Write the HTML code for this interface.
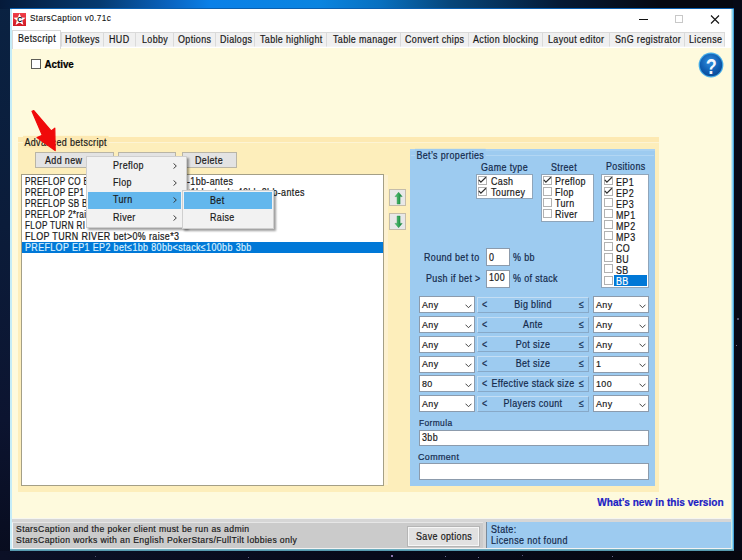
<!DOCTYPE html>
<html><head><meta charset="utf-8">
<style>
*{margin:0;padding:0;box-sizing:border-box}
html,body{width:742px;height:560px;overflow:hidden}
body{position:relative;background:#0a1730;font-family:"Liberation Sans",sans-serif;font-size:9.6px;color:#1a1a1a}
.a{position:absolute}
.t{position:absolute;line-height:11px;white-space:nowrap;font-size:9.6px;-webkit-text-stroke-width:0.2px;letter-spacing:0.4px;transform:translateY(-0.3px) scale(0.93,1.1);transform-origin:0 8.8px}
.nb{letter-spacing:0;transform:translateY(-0.3px) scaleY(1.1)}
#bg{position:absolute;left:0;top:0;width:742px;height:560px;
 background:linear-gradient(180deg,rgba(0,0,0,0) 0px,rgba(0,0,0,0) 560px),
  linear-gradient(180deg,#0a2242 0%,#0b1c3a 40%,#0c1430 75%,#080c1e 100%)}
#topglow{position:absolute;left:0;top:0;width:742px;height:9px;
 background:linear-gradient(90deg,#051a3a 0px,#053a70 100px,#0a64c0 170px,#0a80e8 210px,#0a84e0 320px,#0870c0 380px,#06467a 450px,#051a35 560px,#050812 660px,#050812 742px)}
#rightdark{position:absolute;left:733px;top:0;width:9px;height:560px;background:#060916}
#botdark{position:absolute;left:0;top:551px;width:742px;height:9px;background:linear-gradient(90deg,#0b1026,#070a1a 50%,#05070f)}
#win{position:absolute;left:10px;top:8px;width:724px;height:543px;background:#0a5fb0}
#wl{position:absolute;left:10px;top:9px;width:1.8px;height:541px;background:#c4ecf8}
#wr{position:absolute;left:730.5px;top:9px;width:3.5px;height:541px;background:linear-gradient(90deg,#e2e2d6 0%,#b8ecfa 30%,#55b5e3 75%,#2a80c0 100%)}
#wb{position:absolute;left:10px;top:549px;width:724px;height:2px;background:linear-gradient(180deg,#7ab8c8 0%,#4a90a6 100%)}
#title{position:absolute;left:11px;top:9px;width:720px;height:23px;background:#fff}
#tabs{position:absolute;left:11px;top:31px;width:720px;height:17px;background:#fff}
.tab{position:absolute;top:31.5px;height:15.5px;background:#f0f0f0;border:1px solid #dadada;border-bottom:1px solid #f4f4f4}
#content{position:absolute;left:11px;top:47.5px;width:720px;height:472px;background:#fefadd}
#group{position:absolute;left:18px;top:137px;width:641px;height:355px;background:#fdeebb}
#list{position:absolute;left:21px;top:174px;width:363px;height:312px;background:#fff;border:1px solid #a49f86}
.btn{position:absolute;background:#e3e3e3;border:1px solid #b9b5a6}
#panel{position:absolute;left:410px;top:149px;width:245px;height:337px;background:#9dcbf0}
.box{position:absolute;background:#fff;border:1px solid #8fa5ba}
.cb{position:absolute;width:9px;height:9px;border:1px solid #b2b2b2;background:#fff}
.lbl{color:#142a4c}
.combo{position:absolute;width:56px;height:17px;background:#fff;border:1px solid #8c9bac}
.mid{position:absolute;left:477px;width:112px;height:16px;background:#9dcbf0;border:1px solid #c4def4;border-right-color:#87a9c8;border-bottom-color:#87a9c8}
.inp{position:absolute;background:#fff;border:1px solid #8c9bac}
#menu{position:absolute;left:86px;top:156px;width:101px;height:72px;background:#f2f2f2;border:1px solid #cfcfcf;box-shadow:2px 2px 2px rgba(0,0,0,0.38)}
#sub{position:absolute;left:182px;top:190px;width:92px;height:39px;background:#f2f2f2;border:1px solid #cfcfcf;box-shadow:2px 2px 2px rgba(0,0,0,0.38)}
.hl{position:absolute;background:#63b7ed}
</style></head><body>
<div id="bg"></div>
<div id="topglow"></div>
<div id="rightdark"></div>
<div id="botdark"></div>
<div class="a" style="left:391px;top:555px;width:2px;height:2px;background:#b89ae0;border-radius:1px"></div>
<div class="a" style="left:445px;top:556px;width:1px;height:1px;background:#6a6a90"></div>
<div class="a" style="left:478px;top:557px;width:1px;height:1px;background:#707090"></div>
<div class="a" style="left:522px;top:555px;width:1px;height:1px;background:#5a5a80"></div>
<div class="a" style="left:612px;top:556px;width:1px;height:1px;background:#6a6a90"></div>
<div class="a" style="left:664px;top:547px;width:1px;height:1px;background:#8080a0"></div>
<div class="a" style="left:737px;top:318px;width:2px;height:2px;background:#6a6a88;border-radius:1px"></div>
<div class="a" style="left:736px;top:345px;width:1px;height:1px;background:#707090"></div>
<div class="a" style="left:95px;top:556px;width:1px;height:1px;background:#505070"></div>
<div class="a" style="left:248px;top:557px;width:1px;height:1px;background:#606080"></div>
<div id="win"></div>
<div id="title"></div>
<!-- icon -->
<svg class="a" style="left:12.5px;top:12.5px" width="13" height="13" viewBox="0 0 13 13">
 <defs><linearGradient id="ig" x1="0" y1="0" x2="0" y2="1"><stop offset="0" stop-color="#f0404a"/><stop offset="1" stop-color="#d01822"/></linearGradient></defs>
 <rect x="0" y="0" width="13" height="13" fill="url(#ig)"/>
 <polygon points="6.5,0.6 8.2,4.6 12.6,4.8 9.2,7.6 10.4,12 6.5,9.6 2.6,12 3.8,7.6 0.4,4.8 4.8,4.6" fill="#fff"/>
 <text x="6.6" y="9.3" font-size="6.8" font-weight="bold" text-anchor="middle" fill="#000" font-family="Liberation Sans">C</text>
</svg>
<div class="t" style="left:29.5px;top:13px;font-size:8.85px;color:#111;-webkit-text-stroke-width:0.1px">StarsCaption v0.71c</div>
<!-- title buttons -->
<div class="a" style="left:639px;top:19px;width:9px;height:1px;background:#111"></div>
<div class="a" style="left:675px;top:15px;width:8px;height:8px;border:1px solid #c8c8c8"></div>
<svg class="a" style="left:710px;top:15px" width="10" height="9" viewBox="0 0 10 9"><path d="M1 0.5 L9 8.5 M9 0.5 L1 8.5" stroke="#111" stroke-width="1.1"/></svg>

<div id="tabs"></div>
<div class="tab" style="left:61px;width:43px"></div>
<div class="tab" style="left:103px;width:33px"></div>
<div class="tab" style="left:135px;width:39px"></div>
<div class="tab" style="left:173px;width:43px"></div>
<div class="tab" style="left:215px;width:40px"></div>
<div class="tab" style="left:254px;width:73px"></div>
<div class="tab" style="left:326px;width:75px"></div>
<div class="tab" style="left:400px;width:69px"></div>
<div class="tab" style="left:468px;width:75px"></div>
<div class="tab" style="left:542px;width:68px"></div>
<div class="tab" style="left:609px;width:76px"></div>
<div class="tab" style="left:684px;width:41px"></div>
<div id="content"></div>
<div class="a" style="left:12px;top:30px;width:49px;height:19px;background:#fff;border:1px solid #d9d9d9;border-bottom:none"></div>
<div class="t" style="left:17.8px;top:33px">Betscript</div>
<div class="t" style="left:65px;top:34.5px;transform:translateY(-0.6px) scale(0.93,1.06)">Hotkeys</div>
<div class="t" style="left:109px;top:34.5px;transform:translateY(-0.6px) scale(0.93,1.06)">HUD</div>
<div class="t" style="left:142px;top:34.5px;transform:translateY(-0.6px) scale(0.93,1.06)">Lobby</div>
<div class="t" style="left:177.6px;top:34.5px;transform:translateY(-0.6px) scale(0.93,1.06)">Options</div>
<div class="t" style="left:220px;top:34.5px;transform:translateY(-0.6px) scale(0.93,1.06)">Dialogs</div>
<div class="t" style="left:260px;top:34.5px;transform:translateY(-0.6px) scale(0.93,1.06)">Table highlight</div>
<div class="t" style="left:332.8px;top:34.5px;transform:translateY(-0.6px) scale(0.93,1.06)">Table manager</div>
<div class="t" style="left:405.3px;top:34.5px;transform:translateY(-0.6px) scale(0.93,1.06)">Convert chips</div>
<div class="t" style="left:472.8px;top:34.5px;transform:translateY(-0.6px) scale(0.93,1.06)">Action blocking</div>
<div class="t" style="left:548.3px;top:34.5px;transform:translateY(-0.6px) scale(0.93,1.06)">Layout editor</div>
<div class="t" style="left:615px;top:34.5px;transform:translateY(-0.6px) scale(0.93,1.06)">SnG registrator</div>
<div class="t" style="left:689px;top:34.5px;transform:translateY(-0.6px) scale(0.93,1.06)">License</div>

<!-- Active -->
<div class="a" style="left:30.8px;top:59.2px;width:10px;height:10.2px;border:1.2px solid #5e5e58;background:#fff"></div>
<div class="t nb" style="left:44.4px;top:58.5px;font-weight:bold;font-size:9.8px;color:#000">Active</div>

<!-- help icon -->
<svg class="a" style="left:698px;top:52px" width="26" height="26" viewBox="0 0 26 26">
 <defs><radialGradient id="hg" cx="0.45" cy="0.35" r="0.7"><stop offset="0" stop-color="#2f8ee0"/><stop offset="0.65" stop-color="#0f5cb0"/><stop offset="1" stop-color="#0a4690"/></radialGradient></defs>
 <circle cx="13" cy="13" r="12.4" fill="#46aeea"/>
 <circle cx="13" cy="13" r="11.2" fill="url(#hg)"/>
 <text transform="translate(13.2,21.6) scale(0.8,1)" x="0" y="0" font-size="22.5" font-weight="bold" text-anchor="middle" fill="#f4f8ff" font-family="Liberation Sans">?</text>
</svg>

<!-- group -->
<div id="group"></div>
<div class="a" style="left:18px;top:137px;width:641px;height:5px;background:#fde9b2"></div>
<div class="a" style="left:18px;top:142px;width:641px;height:1px;background:#fdf4d4"></div>
<div class="t" style="left:22.5px;top:137px;padding:0 2px 0 1.5px;background:#fde9b2">Advanced betscript</div>
<div class="btn" style="left:35px;top:152px;width:79px;height:16px"></div>
<div class="btn" style="left:118px;top:152px;width:58px;height:16px"></div>
<div class="btn" style="left:182px;top:152px;width:55px;height:16px"></div>
<div class="t" style="left:44.8px;top:155px">Add new</div>
<div class="t" style="left:195px;top:155px">Delete</div>

<div id="list"></div>
<div class="a" style="left:22px;top:242px;width:361px;height:11px;background:#0078d7"></div>
<div class="t" style="left:24.5px;top:175.8px;transform:translateY(-0.3px) scale(0.85,1.1)">PREFLOP CO BU bet≤1bb</div><div class="t" style="left:186.6px;top:175.8px">-1bb-antes</div>
<div class="t" style="left:24.5px;top:186.8px;transform:translateY(-0.3px) scale(0.85,1.1)">PREFLOP EP1 &nbsp;bet≤1bb</div><div class="t" style="right:437.5px;top:186.8px;transform-origin:100% 8.8px">bet≤1bb stack≥40bb 2bb-antes</div>
<div class="t" style="left:24.5px;top:197.8px;transform:translateY(-0.3px) scale(0.85,1.1)">PREFLOP SB BB bet≤1bb 3bb</div>
<div class="t" style="left:24.5px;top:208.8px;transform:translateY(-0.3px) scale(0.85,1.1)">PREFLOP 2*raise 4bb</div>
<div class="t" style="left:24.5px;top:219.8px;transform:translateY(-0.3px) scale(0.85,1.1)">FLOP TURN RI</div>
<div class="t" style="left:24.5px;top:230.8px">FLOP TURN RIVER bet&gt;0% raise*3</div>
<div class="t" style="left:24.5px;top:241.8px;color:#d8f0ff">PREFLOP EP1 EP2 bet≤1bb 80bb&lt;stack≤100bb 3bb</div>

<div class="a" style="left:384px;top:175px;width:3.5px;height:310px;background:#fdf1d0"></div>
<!-- up/down -->
<div class="btn" style="left:389px;top:189px;width:17px;height:17px;background:#e8e8e8;border-color:#c4bcaa"></div>
<div class="btn" style="left:389px;top:213px;width:17px;height:17px;background:#e8e8e8;border-color:#c4bcaa"></div>
<svg class="a" style="left:393px;top:191px" width="11" height="14" viewBox="0 0 11 14"><defs><linearGradient id="ga" x1="0" y1="0" x2="1" y2="0"><stop offset="0" stop-color="#5ccf7c"/><stop offset="1" stop-color="#0f7a35"/></linearGradient></defs><path d="M5.6 1.2 L9.2 5.6 L7.1 5.6 L7.1 13 L4.1 13 L4.1 5.6 L2 5.6 Z" fill="url(#ga)" stroke="#1a8a40" stroke-width="0.4"/></svg>
<svg class="a" style="left:393px;top:215px" width="11" height="14" viewBox="0 0 11 14"><path d="M5.6 12.8 L9.2 8.4 L7.1 8.4 L7.1 1 L4.1 1 L4.1 8.4 L2 8.4 Z" fill="url(#ga)" stroke="#1a8a40" stroke-width="0.4"/></svg>

<!-- panel -->
<div id="panel"></div>
<div class="a" style="left:410px;top:149px;width:245px;height:2px;background:#a8d1f2"></div>
<div class="a" style="left:411px;top:154.5px;width:243px;height:1px;background:#b2d6f3"></div>
<div class="t lbl" style="left:414.5px;top:149.8px;padding:0 2px 0 1.5px;background:#9dcbf0">Bet’s properties</div>
<div class="t lbl" style="left:481.4px;top:161.6px">Game type</div>
<div class="t lbl" style="left:551.4px;top:161.6px">Street</div>
<div class="t lbl" style="left:605.5px;top:161px">Positions</div>

<div class="box" style="left:475.5px;top:174px;width:57px;height:24.5px"></div>
<div class="box" style="left:540.5px;top:173.5px;width:53px;height:48px"></div>
<div class="box" style="left:600.8px;top:173.8px;width:48.2px;height:114px"></div>

<!-- positions BB highlight -->
<div class="a" style="left:614px;top:275px;width:33px;height:10.5px;background:#0078d7"></div>

<div class="cb" style="left:478px;top:176.2px"></div><svg class="a" style="left:478px;top:176.2px" width="9" height="9" viewBox="0 0 9 9"><path d="M0.8 3.9 L2.9 6.2 L7.9 1.3" fill="none" stroke="#2e2e2e" stroke-width="1.2"/></svg>
<div class="t" style="left:490.9px;top:176.4px">Cash</div>
<div class="cb" style="left:478px;top:187.2px"></div><svg class="a" style="left:478px;top:187.2px" width="9" height="9" viewBox="0 0 9 9"><path d="M0.8 3.9 L2.9 6.2 L7.9 1.3" fill="none" stroke="#2e2e2e" stroke-width="1.2"/></svg>
<div class="t" style="left:490.9px;top:187.4px">Tourney</div>
<div class="cb" style="left:543.2px;top:176.2px"></div><svg class="a" style="left:543.2px;top:176.2px" width="9" height="9" viewBox="0 0 9 9"><path d="M0.8 3.9 L2.9 6.2 L7.9 1.3" fill="none" stroke="#2e2e2e" stroke-width="1.2"/></svg>
<div class="t" style="left:555px;top:176.0px">Preflop</div>
<div class="cb" style="left:543.2px;top:187.2px"></div>
<div class="t" style="left:555px;top:187.0px">Flop</div>
<div class="cb" style="left:543.2px;top:198.2px"></div>
<div class="t" style="left:555px;top:198.0px">Turn</div>
<div class="cb" style="left:543.2px;top:209.2px"></div>
<div class="t" style="left:555px;top:209.0px">River</div>
<div class="cb" style="left:604px;top:176.2px"></div><svg class="a" style="left:604px;top:176.2px" width="9" height="9" viewBox="0 0 9 9"><path d="M0.8 3.9 L2.9 6.2 L7.9 1.3" fill="none" stroke="#2e2e2e" stroke-width="1.2"/></svg>
<div class="t" style="left:615.5px;top:176.5px">EP1</div>
<div class="cb" style="left:604px;top:187.2px"></div><svg class="a" style="left:604px;top:187.2px" width="9" height="9" viewBox="0 0 9 9"><path d="M0.8 3.9 L2.9 6.2 L7.9 1.3" fill="none" stroke="#2e2e2e" stroke-width="1.2"/></svg>
<div class="t" style="left:615.5px;top:187.5px">EP2</div>
<div class="cb" style="left:604px;top:198.3px"></div>
<div class="t" style="left:615.5px;top:198.6px">EP3</div>
<div class="cb" style="left:604px;top:209.3px"></div>
<div class="t" style="left:615.5px;top:209.6px">MP1</div>
<div class="cb" style="left:604px;top:220.3px"></div>
<div class="t" style="left:615.5px;top:220.6px">MP2</div>
<div class="cb" style="left:604px;top:231.4px"></div>
<div class="t" style="left:615.5px;top:231.7px">MP3</div>
<div class="cb" style="left:604px;top:242.4px"></div>
<div class="t" style="left:615.5px;top:242.7px">CO</div>
<div class="cb" style="left:604px;top:253.4px"></div>
<div class="t" style="left:615.5px;top:253.7px">BU</div>
<div class="cb" style="left:604px;top:264.4px"></div>
<div class="t" style="left:615.5px;top:264.7px">SB</div>
<div class="cb" style="left:604px;top:275.5px"></div>
<div class="t" style="left:615.5px;top:275.8px;color:#fff">BB</div>

<div class="t lbl" style="left:424px;top:251.8px;transform:scale(0.93,1.12)">Round bet to</div>
<div class="t lbl" style="left:426px;top:272.8px;transform:scale(0.93,1.12)">Push if bet &gt;</div>
<div class="inp" style="left:486px;top:248px;width:24px;height:17.5px"></div>
<div class="inp" style="left:486px;top:270px;width:24px;height:17.5px"></div>
<div class="t" style="left:489px;top:251.5px">0</div>
<div class="t" style="left:489px;top:272.4px">100</div>
<div class="t lbl" style="left:513px;top:251.8px;transform:scale(0.93,1.12)">% bb</div>
<div class="t lbl" style="left:513px;top:272.8px;transform:scale(0.93,1.12)">% of stack</div>

<div class="combo" style="left:419px;top:296.2px"></div>
<div class="t" style="left:422px;top:299.1px;transform:translateY(-0.3px) scale(0.93,0.98)">Any</div>
<svg class="a" style="left:465px;top:303.8px" width="7" height="4.5" viewBox="0 0 7 4.5"><path d="M0.5 0.7 L3.5 3.7 L6.5 0.7" fill="none" stroke="#3a3a3a" stroke-width="0.95"/></svg>
<div class="mid" style="top:296.7px"></div>
<div class="t lbl" style="left:482px;top:299.0px">&lt;</div>
<div class="t lbl" style="left:578.5px;top:299.0px">≤</div>
<div class="t lbl" style="left:477px;width:112px;text-align:center;transform-origin:50% 8.8px;top:299.0px">Big blind</div>
<div class="combo" style="left:593px;top:296.2px"></div>
<div class="t" style="left:595.7px;top:299.1px;transform:translateY(-0.3px) scale(0.93,0.98)">Any</div>
<svg class="a" style="left:639px;top:303.8px" width="7" height="4.5" viewBox="0 0 7 4.5"><path d="M0.5 0.7 L3.5 3.7 L6.5 0.7" fill="none" stroke="#3a3a3a" stroke-width="0.95"/></svg>
<div class="combo" style="left:419px;top:316.0px"></div>
<div class="t" style="left:422px;top:318.9px;transform:translateY(-0.3px) scale(0.93,0.98)">Any</div>
<svg class="a" style="left:465px;top:323.6px" width="7" height="4.5" viewBox="0 0 7 4.5"><path d="M0.5 0.7 L3.5 3.7 L6.5 0.7" fill="none" stroke="#3a3a3a" stroke-width="0.95"/></svg>
<div class="mid" style="top:316.5px"></div>
<div class="t lbl" style="left:482px;top:318.8px">&lt;</div>
<div class="t lbl" style="left:578.5px;top:318.8px">≤</div>
<div class="t lbl" style="left:477px;width:112px;text-align:center;transform-origin:50% 8.8px;top:318.8px">Ante</div>
<div class="combo" style="left:593px;top:316.0px"></div>
<div class="t" style="left:595.7px;top:318.9px;transform:translateY(-0.3px) scale(0.93,0.98)">Any</div>
<svg class="a" style="left:639px;top:323.6px" width="7" height="4.5" viewBox="0 0 7 4.5"><path d="M0.5 0.7 L3.5 3.7 L6.5 0.7" fill="none" stroke="#3a3a3a" stroke-width="0.95"/></svg>
<div class="combo" style="left:419px;top:335.8px"></div>
<div class="t" style="left:422px;top:338.7px;transform:translateY(-0.3px) scale(0.93,0.98)">Any</div>
<svg class="a" style="left:465px;top:343.4px" width="7" height="4.5" viewBox="0 0 7 4.5"><path d="M0.5 0.7 L3.5 3.7 L6.5 0.7" fill="none" stroke="#3a3a3a" stroke-width="0.95"/></svg>
<div class="mid" style="top:336.3px"></div>
<div class="t lbl" style="left:482px;top:338.6px">&lt;</div>
<div class="t lbl" style="left:578.5px;top:338.6px">≤</div>
<div class="t lbl" style="left:477px;width:112px;text-align:center;transform-origin:50% 8.8px;top:338.6px">Pot size</div>
<div class="combo" style="left:593px;top:335.8px"></div>
<div class="t" style="left:595.7px;top:338.7px;transform:translateY(-0.3px) scale(0.93,0.98)">Any</div>
<svg class="a" style="left:639px;top:343.4px" width="7" height="4.5" viewBox="0 0 7 4.5"><path d="M0.5 0.7 L3.5 3.7 L6.5 0.7" fill="none" stroke="#3a3a3a" stroke-width="0.95"/></svg>
<div class="combo" style="left:419px;top:355.5px"></div>
<div class="t" style="left:422px;top:358.4px;transform:translateY(-0.3px) scale(0.93,0.98)">Any</div>
<svg class="a" style="left:465px;top:363.1px" width="7" height="4.5" viewBox="0 0 7 4.5"><path d="M0.5 0.7 L3.5 3.7 L6.5 0.7" fill="none" stroke="#3a3a3a" stroke-width="0.95"/></svg>
<div class="mid" style="top:356.0px"></div>
<div class="t lbl" style="left:482px;top:358.3px">&lt;</div>
<div class="t lbl" style="left:578.5px;top:358.3px">≤</div>
<div class="t lbl" style="left:477px;width:112px;text-align:center;transform-origin:50% 8.8px;top:358.3px">Bet size</div>
<div class="combo" style="left:593px;top:355.5px"></div>
<div class="t" style="left:595.7px;top:358.4px;transform:translateY(-0.3px) scale(0.93,0.98)">1</div>
<svg class="a" style="left:639px;top:363.1px" width="7" height="4.5" viewBox="0 0 7 4.5"><path d="M0.5 0.7 L3.5 3.7 L6.5 0.7" fill="none" stroke="#3a3a3a" stroke-width="0.95"/></svg>
<div class="combo" style="left:419px;top:375.3px"></div>
<div class="t" style="left:422px;top:378.2px;transform:translateY(-0.3px) scale(0.93,0.98)">80</div>
<svg class="a" style="left:465px;top:382.9px" width="7" height="4.5" viewBox="0 0 7 4.5"><path d="M0.5 0.7 L3.5 3.7 L6.5 0.7" fill="none" stroke="#3a3a3a" stroke-width="0.95"/></svg>
<div class="mid" style="top:375.8px"></div>
<div class="t lbl" style="left:482px;top:378.1px">&lt;</div>
<div class="t lbl" style="left:578.5px;top:378.1px">≤</div>
<div class="t lbl" style="left:477px;width:112px;text-align:center;transform-origin:50% 8.8px;top:378.1px">Effective stack size</div>
<div class="combo" style="left:593px;top:375.3px"></div>
<div class="t" style="left:595.7px;top:378.2px;transform:translateY(-0.3px) scale(0.93,0.98)">100</div>
<svg class="a" style="left:639px;top:382.9px" width="7" height="4.5" viewBox="0 0 7 4.5"><path d="M0.5 0.7 L3.5 3.7 L6.5 0.7" fill="none" stroke="#3a3a3a" stroke-width="0.95"/></svg>
<div class="combo" style="left:419px;top:395.1px"></div>
<div class="t" style="left:422px;top:398.0px;transform:translateY(-0.3px) scale(0.93,0.98)">Any</div>
<svg class="a" style="left:465px;top:402.7px" width="7" height="4.5" viewBox="0 0 7 4.5"><path d="M0.5 0.7 L3.5 3.7 L6.5 0.7" fill="none" stroke="#3a3a3a" stroke-width="0.95"/></svg>
<div class="mid" style="top:395.6px"></div>
<div class="t lbl" style="left:482px;top:397.9px">&lt;</div>
<div class="t lbl" style="left:578.5px;top:397.9px">≤</div>
<div class="t lbl" style="left:477px;width:112px;text-align:center;transform-origin:50% 8.8px;top:397.9px">Players count</div>
<div class="combo" style="left:593px;top:395.1px"></div>
<div class="t" style="left:595.7px;top:398.0px;transform:translateY(-0.3px) scale(0.93,0.98)">Any</div>
<svg class="a" style="left:639px;top:402.7px" width="7" height="4.5" viewBox="0 0 7 4.5"><path d="M0.5 0.7 L3.5 3.7 L6.5 0.7" fill="none" stroke="#3a3a3a" stroke-width="0.95"/></svg>

<div class="t lbl" style="left:418.6px;top:416.6px;transform:translateY(-0.3px) scale(0.88,1.0)">Formula</div>
<div class="inp" style="left:419px;top:430px;width:230px;height:16px"></div>
<div class="t" style="left:421.7px;top:431.7px">3bb</div>
<div class="t lbl" style="left:418.3px;top:450.5px;transform:translateY(-0.3px) scale(0.93,1.03)">Comment</div>
<div class="inp" style="left:418.5px;top:463px;width:230.5px;height:17px"></div>

<div class="t nb" style="left:597.2px;top:497px;font-weight:bold;font-size:10.1px;color:#1c1cc4">What’s new in this version</div>

<!-- status bar -->
<div class="a" style="left:11px;top:517.5px;width:720px;height:1.5px;background:#f6f6f0"></div>
<div class="a" style="left:11px;top:519px;width:720px;height:30px;background:#d6d6d6"></div>
<div class="a" style="left:11px;top:547.5px;width:720px;height:1.5px;background:#f2f2f2"></div>
<div class="a" style="left:12px;top:521.5px;width:471px;height:26px;background:#cbcbcb;border-top:1px solid #e6e6e6;border-left:1px solid #f6f6f6"></div>
<div class="t" style="left:16px;top:523px;font-size:9.3px;transform:translateY(0.9px) scale(0.93,0.9)">StarsCaption and the poker client must be run as admin</div>
<div class="t" style="left:16px;top:534.2px;font-size:9.3px;transform:translateY(0.9px) scale(0.93,0.9)">StarsCaption works with an English PokerStars/FullTilt lobbies only</div>
<div class="a" style="left:407.5px;top:526.5px;width:71.5px;height:19px;background:#e1e1e1;border:1px solid #f6f6f6;outline:1px solid #b5b5b5"></div>
<div class="t" style="left:415.5px;top:531px">Save options</div>
<div class="a" style="left:486px;top:521.5px;width:245px;height:26px;background:#9dcbf0;border-left:1px solid #7b8a99"></div>
<div class="t lbl" style="left:490.7px;top:524px">State:</div>
<div class="t lbl" style="left:490.7px;top:534.7px">License not found</div>

<!-- red arrow -->
<svg class="a" style="left:0;top:0" width="742" height="560"><polygon points="32,111.2 33.8,110.6 51.2,131 54.8,128.2 55.2,150.6 37,137.6 42.3,135.3" fill="#f00a0a" stroke="#f00a0a" stroke-width="1.2" stroke-linejoin="round"/></svg>

<!-- popup menu -->
<div id="menu"></div>
<div class="hl" style="left:88px;top:192px;width:93px;height:17px"></div>
<div class="t" style="left:113.2px;top:160px">Preflop</div>
<div class="t" style="left:113.2px;top:177px">Flop</div>
<div class="t" style="left:113.2px;top:194px">Turn</div>
<div class="t" style="left:113.2px;top:211.5px">River</div>
<div id="sub"></div>
<div class="hl" style="left:184px;top:192px;width:88px;height:17px"></div>
<div class="t" style="left:209.8px;top:194.5px">Bet</div>
<div class="t" style="left:209.8px;top:211.5px">Raise</div>
<svg class="a" style="left:173px;top:162.7px" width="4" height="6" viewBox="0 0 4 6"><path d="M0.5 0.4 L3.3 3 L0.5 5.6" fill="none" stroke="#333" stroke-width="0.95"/></svg>
<svg class="a" style="left:173px;top:180.0px" width="4" height="6" viewBox="0 0 4 6"><path d="M0.5 0.4 L3.3 3 L0.5 5.6" fill="none" stroke="#333" stroke-width="0.95"/></svg>
<svg class="a" style="left:173px;top:197.4px" width="4" height="6" viewBox="0 0 4 6"><path d="M0.5 0.4 L3.3 3 L0.5 5.6" fill="none" stroke="#333" stroke-width="0.95"/></svg>
<svg class="a" style="left:173px;top:214.7px" width="4" height="6" viewBox="0 0 4 6"><path d="M0.5 0.4 L3.3 3 L0.5 5.6" fill="none" stroke="#333" stroke-width="0.95"/></svg>
<div id="wl"></div><div id="wr"></div><div id="wb"></div>
</body></html>
